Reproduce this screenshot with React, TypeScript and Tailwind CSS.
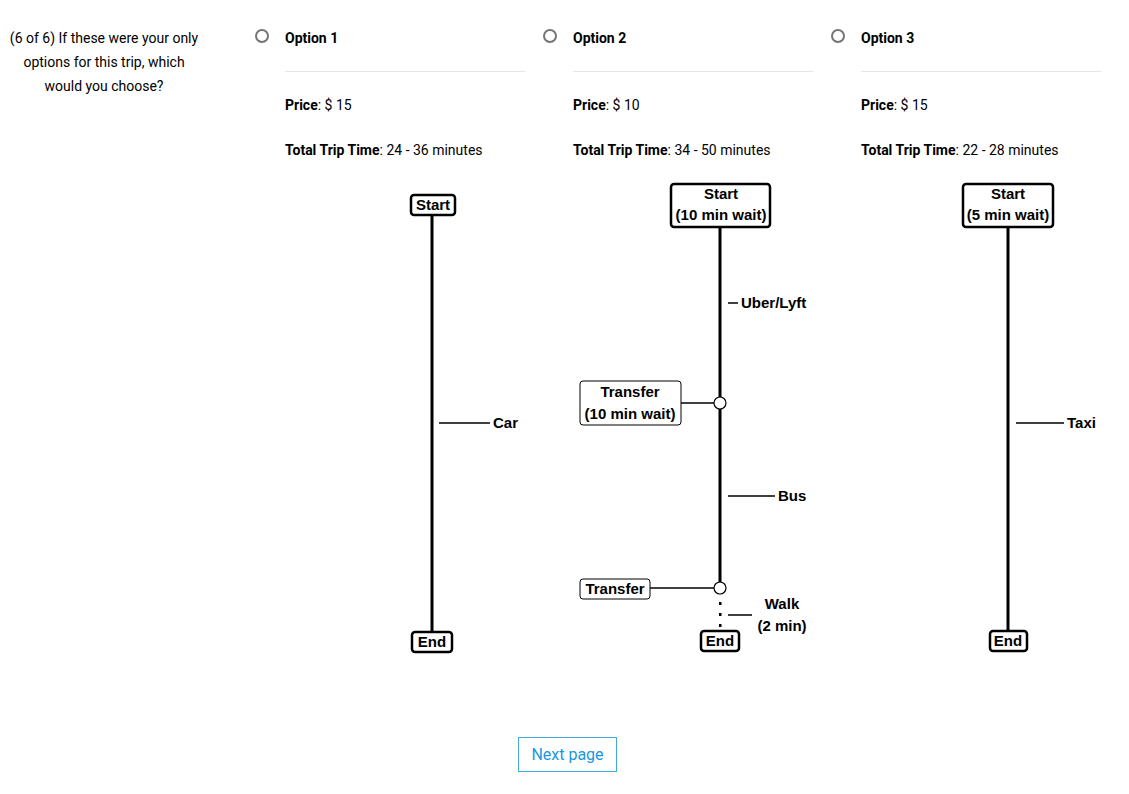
const diagramFont = { fontFamily: '"Liberation Sans", Arial, sans-serif', fontWeight: 700, fontSize: 15 };

function Box({ x, y, w, h, thin }: { x: number; y: number; w: number; h: number; thin?: boolean }) {
  return (
    <rect x={x} y={y} width={w} height={h} rx={3} fill="#fff" stroke="#000" strokeWidth={thin ? 1 : 2.5} />
  );
}

function Label({ x, y, children, anchor = "start" }: { x: number; y: number; children: string; anchor?: "start" | "middle" }) {
  return (
    <text x={x} y={y} textAnchor={anchor} style={diagramFont}>
      {children}
    </text>
  );
}

function DiagramCar() {
  return (
    <svg width="288" height="480" className="overflow-visible">
      <line x1={147} y1={35} x2={147} y2={452} stroke="#000" strokeWidth={3} />
      <Box x={126} y={15} w={44} h={20} />
      <Label x={148} y={30} anchor="middle">Start</Label>
      <line x1={154} y1={243} x2={205} y2={243} stroke="#000" strokeWidth={1.5} />
      <Label x={208} y={248}>Car</Label>
      <Box x={127} y={452} w={40} h={20} />
      <Label x={147} y={467} anchor="middle">End</Label>
    </svg>
  );
}

function DiagramTransit() {
  return (
    <svg width="288" height="480" className="overflow-visible">
      <line x1={147} y1={47} x2={147} y2={408} stroke="#000" strokeWidth={3} />
      <Box x={98} y={4} w={99} h={43} />
      <Label x={148} y={19} anchor="middle">Start</Label>
      <Label x={148} y={40} anchor="middle">(10 min wait)</Label>

      <line x1={155} y1={123} x2={165} y2={123} stroke="#000" strokeWidth={1.5} />
      <Label x={168} y={128}>Uber/Lyft</Label>

      <line x1={108} y1={223} x2={141} y2={223} stroke="#000" strokeWidth={1.5} />
      <Box x={7} y={201} w={101} h={44} thin />
      <Label x={57} y={217} anchor="middle">Transfer</Label>
      <Label x={57} y={239} anchor="middle">(10 min wait)</Label>
      <circle cx={147} cy={223} r={6} fill="#fff" stroke="#000" strokeWidth={1.2} />

      <line x1={155} y1={316} x2={202} y2={316} stroke="#000" strokeWidth={1.5} />
      <Label x={205} y={321}>Bus</Label>

      <line x1={77} y1={408} x2={141} y2={408} stroke="#000" strokeWidth={1.5} />
      <Box x={7} y={399} w={70} h={20} thin />
      <Label x={42} y={414} anchor="middle">Transfer</Label>
      <circle cx={147} cy={408} r={6} fill="#fff" stroke="#000" strokeWidth={1.2} />

      <rect x={146} y={422} width={2.5} height={3} fill="#000" />
      <rect x={146} y={433} width={2.5} height={3} fill="#000" />
      <rect x={146} y={444} width={2.5} height={3} fill="#000" />

      <line x1={155} y1={435} x2={179} y2={435} stroke="#000" strokeWidth={1.5} />
      <Label x={209} y={429} anchor="middle">Walk</Label>
      <Label x={209} y={451} anchor="middle">(2 min)</Label>

      <Box x={128} y={451} w={38} h={20} />
      <Label x={147} y={466} anchor="middle">End</Label>
    </svg>
  );
}

function DiagramTaxi() {
  return (
    <svg width="288" height="480" className="overflow-visible">
      <line x1={147} y1={47} x2={147} y2={451} stroke="#000" strokeWidth={3} />
      <Box x={102} y={4} w={90} h={43} />
      <Label x={147} y={19} anchor="middle">Start</Label>
      <Label x={147} y={40} anchor="middle">(5 min wait)</Label>
      <line x1={155} y1={243} x2={203} y2={243} stroke="#000" strokeWidth={1.5} />
      <Label x={206} y={248}>Taxi</Label>
      <Box x={129} y={451} w={37} h={20} />
      <Label x={147} y={466} anchor="middle">End</Label>
    </svg>
  );
}

const options = [
  { name: "Option 1", price: "$ 15", time: "24 - 36 minutes", diagram: <DiagramCar /> },
  { name: "Option 2", price: "$ 10", time: "34 - 50 minutes", diagram: <DiagramTransit /> },
  { name: "Option 3", price: "$ 15", time: "22 - 28 minutes", diagram: <DiagramTaxi /> },
];

export default function App() {
  return (
    <div className="min-h-[794px] bg-white text-black text-[14px]" style={{ fontFamily: 'Roboto, "Liberation Sans", sans-serif' }}>
      <div className="flex pt-[26px]">
        <div className="w-[255px] shrink-0 pl-[6px] pr-[53px] text-center leading-[24px]">
          (6 of 6) If these were your only options for this trip, which would you choose?
        </div>
        {options.map((o) => (
          <div key={o.name} className="w-[288px] shrink-0">
            <label className="flex items-center h-[24px] gap-[16px] cursor-pointer">
              <span className="w-[14px] h-[14px] -mt-[5px] rounded-full border-2 border-[#757575] bg-white" />
              <span className="font-bold">{o.name}</span>
            </label>
            <div className="pl-[30px]">
              <div className="w-[240px] mt-[21px] border-t border-[#e6e6e6]" />
              <p className="mt-[23px] leading-[20px]">
                <span className="font-bold">Price</span>: {o.price}
              </p>
              <p className="mt-[25px] leading-[20px]">
                <span className="font-bold">Total Trip Time</span>: {o.time}
              </p>
              <div className="mt-[20px]">{o.diagram}</div>
            </div>
          </div>
        ))}
      </div>
      <div className="flex justify-center pl-[6px] mt-[77px]">
        <button className="h-[35px] px-[12px] border border-[#45a8dc] text-[#1a97e2] text-[16px] bg-white">
          Next page
        </button>
      </div>
    </div>
  );
}
